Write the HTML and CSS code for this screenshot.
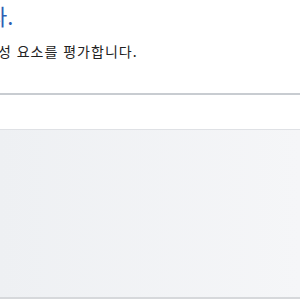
FILE: index.html
```html
<!DOCTYPE html>
<html lang="ko">
<head>
  <meta charset="UTF-8" />
  <meta name="viewport" content="width=device-width, initial-scale=1" />
  <title>평가</title>
  <link rel="stylesheet" href="styles.css">
</head>
<body>

  <div class="head">
    <h1 class="title"><span class="shift-title">다.</span></h1>
    <p class="desc"><span class="shift-desc">구성 요소를 평가합니다.</span></p>
  </div>

  <div class="rule"></div>

  <div class="gap"></div>

  <div class="panel"></div>

</body>
</html>
```

FILE: styles.css
```css
body {
  margin: 0;
  font-family: "Noto Sans CJK KR", "Noto Sans", sans-serif;
  background: #fff;
  color: #222;
}
.head {
  overflow: hidden;
  height: 93px;
}
.title {
  margin: 0;
  font-size: 22px;
  font-weight: normal;
  line-height: 30px;
  color: #2f5fb3;
  white-space: nowrap;
}
.shift-title {
  display: inline-block;
  margin-left: -13px;
}
.desc {
  margin: 11px 0 0;
  font-size: 14px;
  line-height: 20px;
  letter-spacing: 1px;
  white-space: nowrap;
}
.shift-desc {
  display: inline-block;
  margin-left: -16px;
}
.rule {
  height: 2px;
  background: #c8ccd1;
}
.gap {
  height: 34px;
  border-bottom: 1px solid #dfe1e5;
}
.panel {
  height: 167px;
  background: linear-gradient(to right, #eef0f3, #f5f6f8);
  border-bottom: 2px solid #d6d8db;
}
```
